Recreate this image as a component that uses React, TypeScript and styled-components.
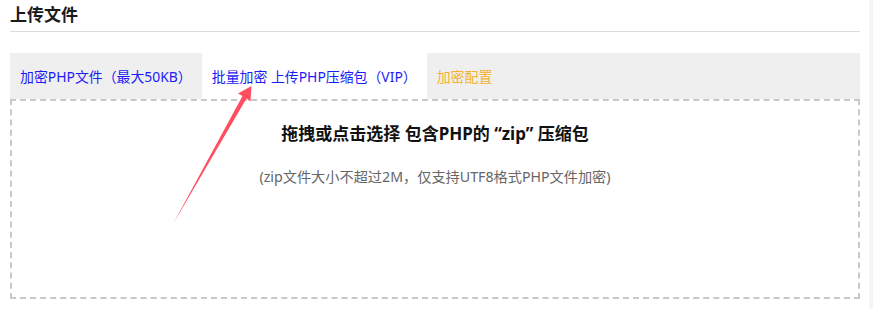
import React from 'react'
import styled, { createGlobalStyle } from 'styled-components'

const GlobalStyle = createGlobalStyle`
  html, body {
    margin: 0;
    padding: 0;
    background: #ffffff;
  }
  body {
    font-family: 'Noto Sans', 'Noto Sans CJK SC', sans-serif;
  }
`

const Page = styled.div`
  position: relative;
  display: grid;
  grid-template-columns: 1fr 4px;
  width: 873px;
  height: 309px;
  overflow: hidden;
`

const Content = styled.div`
  padding: 0 9px 0 10px;
`

const ScrollStrip = styled.div`
  background: #f4f5f7;
`

const Header = styled.div`
  height: 32px;
  border-bottom: 1px solid #d9dde3;
  box-sizing: border-box;
  display: flex;
  align-items: center;
`

const Title = styled.h2`
  margin: 0;
  font-size: 17px;
  font-weight: 700;
  color: #1a1a1a;
  line-height: 1;
  padding-bottom: 2px;
`

const Tabs = styled.div`
  margin-top: 21px;
  height: 46px;
  background: #efefef;
  display: flex;
`

const Tab = styled.div<{ $active?: boolean; $color: string }>`
  display: flex;
  align-items: center;
  padding: 0 10px;
  font-size: 13.9px;
  color: ${(p) => p.$color};
  background: ${(p) => (p.$active ? '#ffffff' : 'transparent')};
  white-space: nowrap;
`

const DropZone = styled.div`
  height: 200px;
  box-sizing: border-box;
  border: 2px dashed #c8c8c8;
  display: flex;
  flex-direction: column;
  align-items: center;
  padding-top: 21px;
`

const DropTitle = styled.div`
  font-size: 17px;
  font-weight: 700;
  color: #111111;
  line-height: 24px;
`

const DropHint = styled.div`
  margin-top: 21px;
  font-size: 14.2px;
  color: #666666;
  line-height: 20px;
`

const ArrowLayer = styled.svg`
  position: absolute;
  left: 160px;
  top: 80px;
  width: 100px;
  height: 150px;
  pointer-events: none;
`

const tabs = [
  { label: '加密PHP文件（最大50KB）', color: '#1b1bf5' },
  { label: '批量加密 上传PHP压缩包（VIP）', color: '#1b1bf5', active: true },
  { label: '加密配置', color: '#f5b132' },
]

export default function App() {
  return (
    <Page>
      <GlobalStyle />
      <Content>
        <Header>
          <Title>上传文件</Title>
        </Header>
        <Tabs>
          {tabs.map((t) => (
            <Tab key={t.label} $active={t.active} $color={t.color}>
              {t.label}
            </Tab>
          ))}
        </Tabs>
        <DropZone>
          <DropTitle>拖拽或点击选择 包含PHP的 “zip” 压缩包</DropTitle>
          <DropHint>(zip文件大小不超过2M，仅支持UTF8格式PHP文件加密)</DropHint>
        </DropZone>
      </Content>
      <ScrollStrip />
      {/* annotation arrow drawn over the tabs */}
      <ArrowLayer viewBox='160 80 100 150'>
        <polygon
          points='173,224 242.5,96 238,93.5 251.5,86 250.5,101.5 246.5,98.5'
          fill='#ff4d62'
        />
      </ArrowLayer>
    </Page>
  )
}
